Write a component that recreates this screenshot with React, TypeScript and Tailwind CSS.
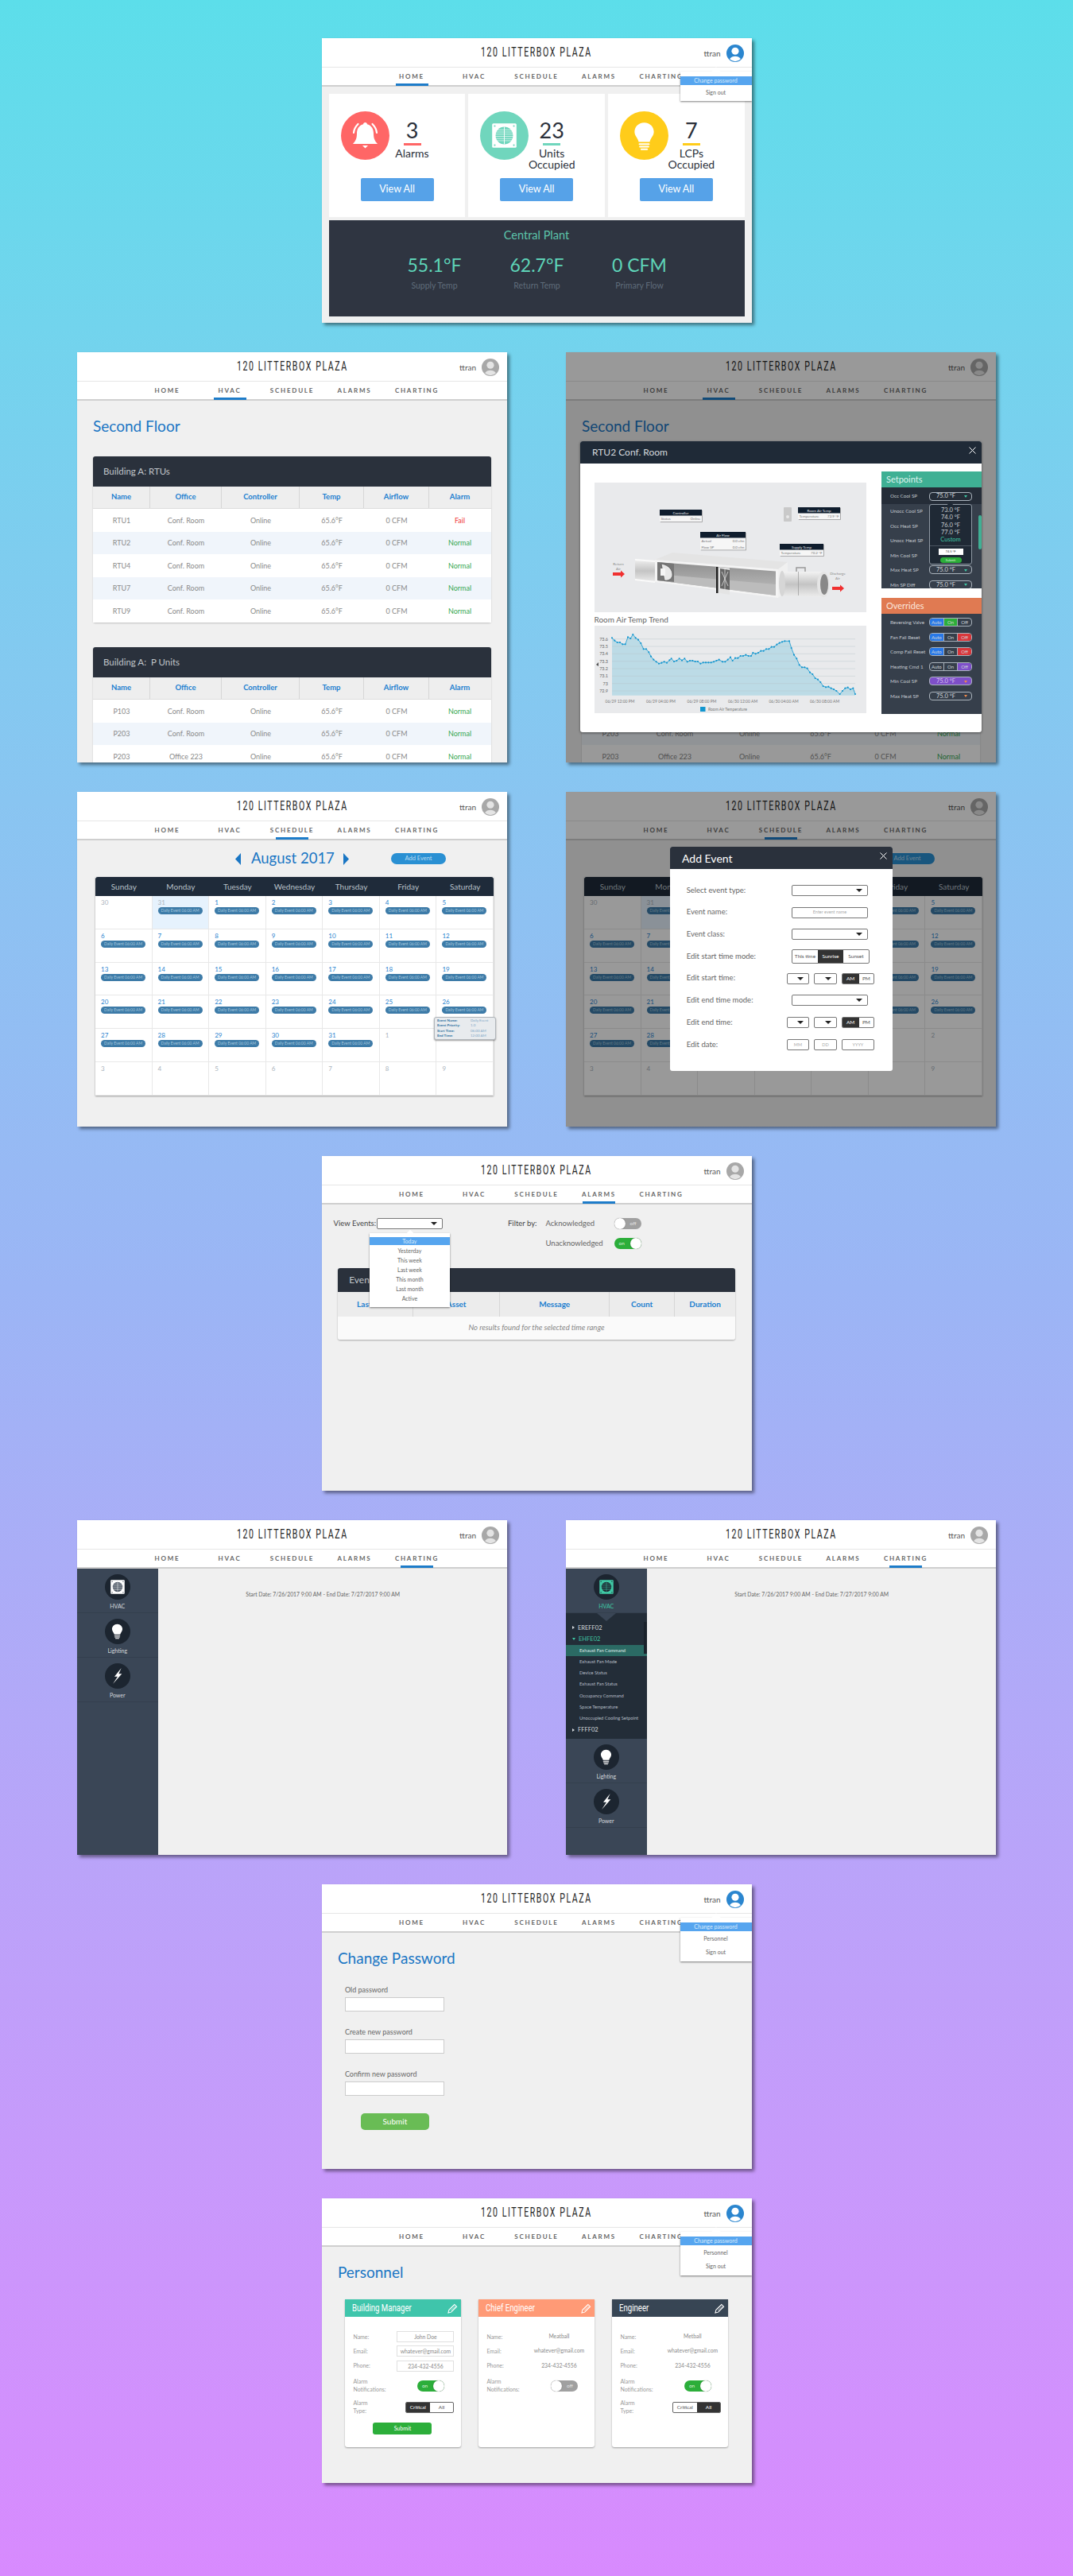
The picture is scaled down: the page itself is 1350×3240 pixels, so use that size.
import type { ReactNode } from 'react'

const NAV = ['HOME', 'HVAC', 'SCHEDULE', 'ALARMS', 'CHARTING']

// chart points read off the reference, x and y in the zoomed pixels
const TREND = [
  [118, 638], [128, 648], [138, 655], [148, 655], [158, 662], [168, 662], [178, 635], [188, 640], [197, 625], [207, 638],
  [217, 645], [227, 658], [237, 680], [247, 680], [257, 692], [265, 708], [275, 720], [285, 728], [295, 735], [305, 732],
  [315, 728], [325, 732], [335, 722], [342, 716], [352, 727], [362, 724], [372, 716], [382, 723], [392, 716], [402, 728],
  [412, 724], [422, 724], [432, 727], [442, 727], [452, 735], [462, 731], [472, 731], [482, 731], [492, 731], [502, 728],
  [512, 724], [522, 720], [535, 728], [545, 728], [555, 720], [565, 711], [573, 724], [583, 714], [593, 714], [603, 706],
  [613, 706], [623, 702], [633, 706], [643, 706], [650, 694], [660, 698], [670, 694], [680, 687], [690, 687], [700, 680],
  [710, 680], [720, 672], [730, 672], [740, 663], [750, 657], [760, 653], [770, 650], [787, 650], [795, 676], [805, 702],
  [815, 716], [825, 740], [835, 749], [845, 749], [855, 753], [865, 768], [875, 775], [885, 790], [895, 795], [905, 805],
  [915, 820], [925, 824], [935, 822], [945, 828], [955, 832], [965, 838], [978, 850], [988, 838], [998, 828], [1008, 825],
  [1018, 832], [1028, 828], [1036, 850],
].map(([x, y]) => [(x - 52) / 3, (y - 592) / 3])

function Avatar({ blue }: { blue?: boolean }) {
  return (
    <svg viewBox="0 0 24 24" className="w-[22px] h-[22px]">
      <circle cx="12" cy="12" r="12" fill={blue ? '#2b86cf' : '#a8a8a8'} />
      <circle cx="12" cy="9" r="5" fill={blue ? '#ffffff' : '#e4e4e4'} />
      <path d="M4.4 20C6 17 9 16 12 16s6 1 7.6 4A11 11 0 0 1 4.4 20Z" fill={blue ? '#ffffff' : '#e4e4e4'} />
    </svg>
  )
}

function BellIcon() {
  return (
    <svg viewBox="0 0 61 61" className="w-[61px] h-[61px]">
      <circle cx="30.5" cy="30.5" r="30.5" fill="#ff6666" />
      <path d="M30.5 14c-1.5 0-2.5 1-2.500 2.300C22 18 20 23 20 28c0 6-1.500 9-5 13h31c-3.500-4-5-7-5-13 0-5-2-10-8-11.700C33 15 32 14 30.500 14Z" fill="#fff" />
      <path d="M27 43h7l-3.500 3.500Z" fill="#fff" />
      <path d="M16 27c.5-5 2.500-8 5.500-11M45 27c-.5-5-2.500-8-5.500-11" stroke="#fff" strokeWidth="2.200" fill="none" strokeLinecap="round" />
    </svg>
  )
}

function FanGlyph({ box, ink }: { box: string; ink: string }) {
  return (
    <>
      <rect x="2" y="2" width="28" height="28" rx="1.500" fill={box} />
      {[5, 27].map((x) => [5, 27].map((y) => <circle key={`${x}-${y}`} cx={x} cy={y} r="1" fill={ink} />))}
      <circle cx="16" cy="16" r="10" fill={ink} />
      {[9, 11.500, 14, 16.500, 19, 21.500].map((y) => (
        <rect key={y} x="5" y={y} width="22" height="0.800" fill={box} opacity="0.700" />
      ))}
      <rect x="15.600" y="6" width="0.800" height="20" fill={box} />
    </>
  )
}

function FanCircle() {
  return (
    <svg viewBox="0 0 61 61" className="w-[61px] h-[61px]">
      <circle cx="30.500" cy="30.500" r="30.500" fill="#70d6bd" />
      <svg x="13" y="13" width="35" height="35" viewBox="0 0 32 32">
        <FanGlyph box="#ffffff" ink="#70d6bd" />
      </svg>
    </svg>
  )
}

function BulbGlyph({ fill }: { fill: string }) {
  return (
    <>
      <path d="M12 1C5.500 1 1.500 6 1.500 11c0 4.500 3.500 6.500 4.500 11h12c1-4.500 4.500-6.500 4.500-11C22.500 6 18.500 1 12 1Z" fill={fill} />
      <rect x="6" y="23.500" width="12" height="1.800" rx="0.900" fill={fill} />
      <rect x="6.500" y="26.300" width="11" height="1.800" rx="0.900" fill={fill} />
      <rect x="8" y="29.100" width="8" height="1.800" rx="0.900" fill={fill} />
    </>
  )
}

function BulbCircle() {
  return (
    <svg viewBox="0 0 61 61" className="w-[61px] h-[61px]">
      <circle cx="30.500" cy="30.500" r="30.500" fill="#ffcc1a" />
      <svg x="16.500" y="13" width="28" height="37" viewBox="0 0 24 32">
        <BulbGlyph fill="#ffffff" />
      </svg>
    </svg>
  )
}

function Shell({
  active,
  blue,
  menu,
  height,
  overlay,
  children,
}: {
  active: string
  blue?: boolean
  menu?: string[]
  height: string
  overlay?: ReactNode
  children: ReactNode
}) {
  return (
    <div className={`relative w-[541px] ${height} bg-[#f0f0f0] flex flex-col overflow-hidden shadow-[3px_3px_4px_rgba(0,0,0,0.45)]`}>
      <div className="relative h-[37px] shrink-0 bg-white flex items-center justify-center border-b border-[#e6e6e6]">
        <span className="inline-block scale-x-[0.66] text-[16px] leading-none tracking-[0.15em] text-[#222] font-['Roboto',sans-serif] whitespace-nowrap">120 LITTERBOX PLAZA</span>
        <div className="absolute right-[10px] top-[8px] flex items-center gap-[7px]">
          <span className="text-[10px] text-[#555]">ttran</span>
          <Avatar blue={blue} />
        </div>
      </div>
      <div className="h-[24px] shrink-0 bg-white flex justify-center border-b-2 border-[#cfcfcf]">
        {NAV.map((item) => (
          <div key={item} className="w-[78.500px] relative flex flex-col items-center">
            <span className="mt-[6px] text-[8px] leading-[10px] font-bold tracking-[0.22em] text-[#666] whitespace-nowrap">{item}</span>
            {item === active && <span className="absolute bottom-[-1px] w-[41px] h-[3px] bg-[#1d7cc9]" />}
          </div>
        ))}
      </div>
      <div className="relative flex-1 min-h-0">{children}</div>
      {overlay && <div className="absolute inset-0 bg-black/40">{overlay}</div>}
      {menu && (
        <div className="absolute right-0 top-[42px] w-[90px] bg-white shadow-[0_1px_2px_rgba(0,0,0,0.5)] pt-[6px] pb-[3px] text-center text-[7px] text-[#666]">
          <span className="absolute top-[-4px] left-[41px] w-[8px] h-[8px] rotate-45 bg-white" />
          {menu.map((item, i) => (
            <div
              key={item}
              className={i === 0 ? 'relative h-[10.700px] leading-[10.700px] bg-[#56a5ef] text-[#dcecfb]' : 'h-[16.500px] leading-[16.500px] mt-[1px] first:mt-0'}
            >
              {item}
            </div>
          ))}
        </div>
      )}
    </div>
  )
}

function StatCard({ icon, count, label, color }: { icon: ReactNode; count: string; label: string[]; color: string }) {
  return (
    <div className="flex-1 h-[155px] bg-white pt-[22px] flex flex-col">
      <div className="h-[84px] flex pl-[15px]">
        {icon}
        <div className="w-[58px] flex flex-col items-center pt-[10px] text-[#2b303a]">
          <span className="text-[27px] leading-[28px]">{count}</span>
          <span className={`w-[22px] h-[3px] mt-[2px] ${color}`} />
          <div className="mt-[3px] text-center text-[14px] leading-[13.500px] whitespace-nowrap">
            {label.map((l) => <div key={l}>{l}</div>)}
          </div>
        </div>
      </div>
      <button className="ml-[40px] w-[92px] h-[29px] rounded-[2px] bg-[#56a2e8] text-white text-[12.500px]">View All</button>
    </div>
  )
}

function HomePanel() {
  const plant = [
    ['55.1°F', 'Supply Temp'],
    ['62.7°F', 'Return Temp'],
    ['0 CFM', 'Primary Flow'],
  ]
  return (
    <Shell active="HOME" blue height="h-[358px]" menu={['Change password', 'Sign out']}>
      <div className="px-[9px] pt-[9px]">
        <div className="flex gap-[4px]">
          <StatCard icon={<BellIcon />} count="3" label={['Alarms']} color="bg-[#ff6666]" />
          <StatCard icon={<FanCircle />} count="23" label={['Units', 'Occupied']} color="bg-[#70d6bd]" />
          <StatCard icon={<BulbCircle />} count="7" label={['LCPs', 'Occupied']} color="bg-[#ffcc1a]" />
        </div>
        <div className="mt-[4px] h-[121px] bg-[#2f3541] flex flex-col items-center">
          <div className="mt-[10px] text-[14.500px] leading-[18px] text-[#5cc4ab]">Central Plant</div>
          <div className="mt-[16px] flex w-[387px] ml-[1px]">
            {plant.map(([value, name]) => (
              <div key={name} className="w-[129px] flex flex-col items-center">
                <span className="text-[23px] leading-[24px] text-[#5ed4b8]">{value}</span>
                <span className="mt-[7px] text-[10.500px] leading-[14px] text-[#5f6c7a]">{name}</span>
              </div>
            ))}
          </div>
        </div>
      </div>
    </Shell>
  )
}

const COLS = 'grid grid-cols-[72px_90px_98px_81px_82px_77px]'

function UnitTable({ title, rows }: { title: string; rows: string[][] }) {
  return (
    <div className="rounded-[3px] shadow-[0_1px_2px_rgba(0,0,0,0.2)]">
      <div className="h-[38px] rounded-t-[3px] bg-[#2a313c] flex items-center pl-[13px] text-[11.500px] text-[#c0c5ca] whitespace-pre">{title}</div>
      <div className={`${COLS} h-[28px] bg-[#eeeeee] border-b border-[#dddddd]`}>
        {['Name', 'Office', 'Controller', 'Temp', 'Airflow', 'Alarm'].map((h) => (
          <div key={h} className="flex items-center justify-center border-r last:border-r-0 border-[#d6d6d6] text-[9.500px] font-bold text-[#1c7fd0]">
            {h}
          </div>
        ))}
      </div>
      {rows.map((row, i) => (
        <div key={i} className={`${COLS} h-[28.600px] items-center text-center text-[9px] text-[#8a8a8a] ${i % 2 ? 'bg-[#f0f5fb]' : 'bg-white'}`}>
          <span>{row[0]}</span>
          <span>{row[1]}</span>
          <span>Online</span>
          <span>65.6°F</span>
          <span>0 CFM</span>
          <span className={row[2] === 'Fail' ? 'text-[#f03a3a]' : 'text-[#35a853]'}>{row[2]}</span>
        </div>
      ))}
    </div>
  )
}

function HvacContent() {
  return (
    <div className="px-[20px] pt-[20px]">
      <h1 className="text-[19px] leading-[24px] text-[#1a76c4]">Second Floor</h1>
      <div className="mt-[26px]">
        <UnitTable
          title="Building A: RTUs"
          rows={[
            ['RTU1', 'Conf. Room', 'Fail'],
            ['RTU2', 'Conf. Room', 'Normal'],
            ['RTU4', 'Conf. Room', 'Normal'],
            ['RTU7', 'Conf. Room', 'Normal'],
            ['RTU9', 'Conf. Room', 'Normal'],
          ]}
        />
      </div>
      <div className="mt-[31px]">
        <UnitTable
          title="Building A:  P Units"
          rows={[
            ['P103', 'Conf. Room', 'Normal'],
            ['P203', 'Conf. Room', 'Normal'],
            ['P203', 'Office 223', 'Normal'],
          ]}
        />
      </div>
    </div>
  )
}

function Tag({ x, y, w, title, rows }: { x: number; y: number; w: number; title: string; rows: string[][] }) {
  return (
    <g fontSize="4.500">
      <rect x={x + 0.800} y={y + 0.800} width={w} height={7.500 + rows.length * 7.500} fill="#999" />
      <rect x={x} y={y} width={w} height={7.500 + rows.length * 7.500} fill="#f6f6f6" />
      <rect x={x} y={y} width={w} height={7.500} fill="#0f1d2d" />
      <text x={x + w / 2} y={y + 5.500} fill="#e6e9ec" textAnchor="middle">{title}</text>
      {rows.map(([k, v], i) => (
        <g key={k} fill="#777">
          <text x={x + 1.500} y={y + 13 + i * 7.500}>{k}</text>
          <text x={x + w - 1.500} y={y + 13 + i * 7.500} textAnchor="end">{v}</text>
        </g>
      ))}
    </g>
  )
}

function DuctDiagram() {
  return (
    <svg viewBox="0 0 342 163" className="w-[342px] h-[163px] block bg-[#e9eaec]">
      <defs>
        <linearGradient id="pipe" x1="0" y1="0" x2="0" y2="1">
          <stop offset="0" stopColor="#f2f2f2" />
          <stop offset="0.500" stopColor="#c4c4c4" />
          <stop offset="1" stopColor="#ededed" />
        </linearGradient>
        <linearGradient id="inner" x1="0" y1="0" x2="0" y2="1">
          <stop offset="0" stopColor="#8f8f8f" />
          <stop offset="0.700" stopColor="#b2b2b2" />
          <stop offset="1" stopColor="#c8c8c8" />
        </linearGradient>
      </defs>
      <Tag x={82} y={34} w={53} title="Controller" rows={[['Status', 'Online']]} />
      <Tag x={133} y={62} w={57} title="Air Flow" rows={[['Actual', '0.0 cfm'], ['Flow SP', '0.0 cfm']]} />
      <Tag x={256} y={31} w={53} title="Room Air Temp" rows={[['Temperature', '72.9 °F']]} />
      <Tag x={233} y={77} w={55} title="Supply Temp" rows={[['Temperature', '70.2 °F']]} />
      <rect x="238" y="31" width="10" height="18" rx="1" fill="#c9c9c9" />
      <circle cx="243" cy="43" r="2" fill="#e8e8e8" />
      <path d="M51 96L76 98V126L51 123Z" fill="url(#pipe)" />
      <path d="M51 96L76 98V100L51 98ZM51 121L76 124V126L51 123Z" fill="#fafafa" />
      <path d="M76 97L98 88L243 100L231 109Z" fill="#e4e4e4" />
      <path d="M231 109L243 100V136L231 145Z" fill="#f0f0f0" />
      <path d="M76 97L231 109V145L76 125Z" fill="#f4f4f4" />
      <path d="M79 100L228 111.500V142L79 123Z" fill="url(#inner)" />
      <path d="M79 115L228 128V142L79 123Z" fill="#bcbcbc" />
      <path d="M79 100L100 102V125L79 123Z" fill="#777" />
      <path d="M84 102C94 104 98 110 98 116C98 120 94 124 88 123Z" fill="#e8e8e8" stroke="#444" strokeWidth="0.600" />
      <rect x="83" y="108" width="6" height="9" fill="#f5f5f5" />
      <path d="M153 106L170 107.500V141L153 138Z" fill="#e4e4e4" />
      <rect x="153" y="106" width="2.500" height="33" fill="#222" />
      <path d="M158 108L170 110V135L158 133Z" fill="#666" />
      <path d="M160 112L168 130M168 112L160 130M164 109V134" stroke="#ddd" strokeWidth="0.800" />
      <path d="M236 112L290 112V144L236 142Z" fill="url(#pipe)" />
      <rect x="256" y="112" width="0.700" height="30" fill="#999" />
      <path d="M254 112V107H265V112" fill="none" stroke="#999" strokeWidth="1.500" />
      <ellipse cx="236" cy="127" rx="4" ry="16" fill="#d6d6d6" />
      <ellipse cx="288" cy="128" rx="8" ry="16" fill="#e5e5e5" />
      <ellipse cx="289" cy="128" rx="5" ry="13" fill="#888" />
      <g fontSize="4.500" fill="#888" textAnchor="middle">
        <text x="30" y="104">Return</text>
        <text x="30" y="110">Air</text>
        <text x="306" y="116">Discharge</text>
        <text x="306" y="122">Air</text>
      </g>
      <path d="M23 113H33V110.500L38 115L33 119.500V117H23Z" fill="#f03030" />
      <path d="M299 131H309V128.500L314 133L309 137.500V135H299Z" fill="#f03030" />
    </svg>
  )
}

function TrendChart() {
  const line = TREND.map(([x, y]) => `${x.toFixed(1)},${y.toFixed(1)}`).join(' ')
  const yLabels = ['73.6', '73.5', '73.4', '73.3', '73.2', '73.1', '73', '72.9']
  const xLabels = ['06/29 12:00 PM', '06/29 04:00 PM', '06/29 08:00 PM', '06/30 12:00 AM', '06/30 04:00 AM', '06/30 08:00 AM']
  return (
    <svg viewBox="0 0 342 110" className="w-[342px] h-[110px] block bg-[#e9eaec]">
      <polygon points={`22,87.7 ${line} 328,87.700`} fill="#bcdbe6" />
      {yLabels.map((label, i) => (
        <g key={label}>
          <line x1="22" x2="328" y1={16.700 + i * 9.330} y2={16.700 + i * 9.330} stroke="#b5c2c8" strokeWidth="0.400" />
          <text x="17" y={18.700 + i * 9.330} fontSize="5.500" fill="#666" textAnchor="end">{label}</text>
        </g>
      ))}
      <path d="M2 49L5 51V46Z" fill="#555" />
      <polyline points={line} fill="none" stroke="#1296cf" strokeWidth="0.800" />
      {TREND.map(([x, y]) => <circle key={x} cx={x} cy={y} r="1.050" fill="#1296cf" />)}
      {xLabels.map((label, i) => (
        <text key={label} x={32 + i * 51.500} y="96.500" fontSize="5" fill="#777" textAnchor="middle">{label}</text>
      ))}
      <rect x="133" y="102" width="6.500" height="6" fill="#1296cf" />
      <text x="143" y="107" fontSize="5" fill="#777">Room Air Temperature</text>
    </svg>
  )
}

function PillSelect({ filled, arrow = '#3fc7a4' }: { filled?: boolean; arrow?: string }) {
  return (
    <div className={`relative w-[54px] h-[11px] rounded-[4px] border border-[#a9b2bb] flex items-center pl-[8px] text-[7.500px] ${filled ? 'bg-[#7e4fc9] text-[#d8c6f0]' : 'text-[#d4d8dc]'}`}>
      75.0 °F
      <span className="absolute right-[5px] top-[3.500px] border-x-[2.500px] border-x-transparent border-t-[3px]" style={{ borderTopColor: arrow }} />
    </div>
  )
}

function Seg({ auto, on, off }: { auto?: string; on?: string; off?: string }) {
  const cells: [string, string | undefined][] = [['Auto', auto], ['On', on], ['Off', off]]
  return (
    <div className="w-[54px] h-[11px] rounded-[4px] border border-[#a9b2bb] overflow-hidden flex text-[6px] leading-[9px] text-center text-[#cfd4d9]">
      {cells.map(([label, color]) => (
        <span key={label} className={`flex-1 border-r last:border-r-0 border-[#a9b2bb] ${color ?? ''}`}>{label}</span>
      ))}
    </div>
  )
}

function SetRow({ label, first, children }: { label: string; first?: boolean; children?: ReactNode }) {
  return (
    <div className={`flex items-center pl-[11px] text-[6.300px] text-[#c3c9cf] ${first ? 'h-[21px] pt-[2px] bg-[#252d38]' : 'h-[18.500px]'}`}>
      <span className="w-[49px] whitespace-nowrap">{label}</span>
      {children}
    </div>
  )
}

function RtuModal() {
  return (
    <div className="absolute left-[18px] top-[112px] w-[505px] h-[366px] bg-white rounded-[3px] overflow-hidden shadow-[0_1px_3px_rgba(0,0,0,0.5)]">
      <div className="relative h-[28px] bg-[#1f2a37] flex items-center pl-[15px] text-[12px] text-[#d5d9dd]">
        RTU2 Conf. Room
        <span className="absolute right-[7px] top-[7px] w-[9px] h-[9px]">
          <svg viewBox="0 0 9 9" className="w-[9px] h-[9px]"><path d="M0.500 0.500L8.500 8.500M8.500 0.500L0.500 8.500" stroke="#fff" strokeWidth="1" /></svg>
        </span>
      </div>
      <div className="flex">
        <div className="w-[379px] pl-[17.500px] pt-[24px]">
          <DuctDiagram />
          <div className="h-[17px] leading-[19px] text-[10px] text-[#666]">Room Air Temp Trend</div>
          <TrendChart />
        </div>
        <div className="w-[126px] pt-[10px]">
          <div className="relative h-[147px] overflow-hidden bg-[#363f4b]">
            <div className="h-[19.500px] bg-[#3fb094] flex items-center pl-[6px] text-[11px] text-[#dff3ee]">Setpoints</div>
            <SetRow label="Occ Cool SP" first><PillSelect /></SetRow>
            <SetRow label="Unocc Cool SP" />
            <SetRow label="Occ Heat SP" />
            <SetRow label="Unocc Heat SP" />
            <SetRow label="Min Cool SP" />
            <SetRow label="Max Heat SP"><PillSelect /></SetRow>
            <SetRow label="Min SP Diff"><PillSelect /></SetRow>
            <span className="absolute right-[0px] top-[55px] w-[4px] h-[43px] rounded-[2px] bg-[#3fb094]" />
            <div className="absolute left-[60px] top-[41px] w-[54px] h-[76px] rounded-[3px] border border-[#8f99a3] bg-[#1f2935] text-center text-[7.500px] leading-[9.300px] text-[#c9ced3] pt-[2px]">
              <span className="absolute left-[23px] top-[-3px] w-[5px] h-[5px] rotate-45 bg-[#1f2935]" />
              <div>73.0 °F</div>
              <div>74.0 °F</div>
              <div>76.0 °F</div>
              <div>77.0 °F</div>
              <div className="text-[#3fc7a4]">Custom</div>
              <div className="mt-[3px] border-t border-[#4a5460] flex flex-col items-center pt-[3px]">
                <div className="w-[31px] h-[8px] bg-white text-[4px] leading-[8px] text-[#333]">74.5 °F</div>
                <div className="mt-[3px] w-[27px] h-[7px] rounded-full bg-[#2cae3a] text-[4px] leading-[7px] text-[#d6f0d9]">Submit</div>
              </div>
            </div>
          </div>
          <div className="mt-[12px] h-[146px] bg-[#363f4b]">
            <div className="h-[19.500px] bg-[#e07a52] flex items-center pl-[6px] text-[11px] text-[#fbe6dc]">Overrides</div>
            <div className="pt-[2px]">
              <SetRow label="Reversing Valve"><Seg auto="bg-[#2878e8]" on="bg-[#2cae3a]" /></SetRow>
              <SetRow label="Fan Fail Reset"><Seg auto="bg-[#2878e8]" off="bg-[#d9363a]" /></SetRow>
              <SetRow label="Comp Fail Reset"><Seg auto="bg-[#2878e8]" off="bg-[#d9363a]" /></SetRow>
              <SetRow label="Heating Cmd 1"><Seg off="bg-[#7e4fc9]" /></SetRow>
              <SetRow label="Min Cool SP"><PillSelect filled arrow="#f08a4b" /></SetRow>
              <SetRow label="Max Heat SP"><PillSelect arrow="#f08a4b" /></SetRow>
            </div>
          </div>
        </div>
      </div>
    </div>
  )
}

const DAYS = ['Sunday', 'Monday', 'Tuesday', 'Wednesday', 'Thursday', 'Friday', 'Saturday']
const DATES = [
  '30', '31', '1', '2', '3', '4', '5',
  '6', '7', '8', '9', '10', '11', '12',
  '13', '14', '15', '16', '17', '18', '19',
  '20', '21', '22', '23', '24', '25', '26',
  '27', '28', '29', '30', '31', '1', '2',
  '3', '4', '5', '6', '7', '8', '9',
]

function Triangle({ flip }: { flip?: boolean }) {
  return (
    <svg viewBox="0 0 7 15" className="w-[7px] h-[15px] shrink-0">
      <path d={flip ? 'M0 0L7 7.500L0 15Z' : 'M7 0L0 7.500L7 15Z'} fill="#1a76c4" />
    </svg>
  )
}

function ScheduleContent({ tip }: { tip?: boolean }) {
  return (
    <div>
      <div className="h-[46px] pl-[199px] flex items-center">
        <Triangle />
        <span className="ml-[13px] w-[102px] text-[18.500px] text-[#1a76c4] whitespace-nowrap">August 2017</span>
        <span className="ml-[14px]"><Triangle flip /></span>
        <button className="ml-[53px] w-[69px] h-[14px] rounded-full bg-[#2a90d3] text-[7.500px] leading-[14px] text-[#b9dcf2]">Add Event</button>
      </div>
      <div className="relative ml-[23px] w-[501px] shadow-[0_1px_2px_rgba(0,0,0,0.35)] bg-white">
        <div className="h-[24px] grid grid-cols-7 bg-[#1f2b3a] rounded-t-[3px]">
          {DAYS.map((d) => (
            <div key={d} className="flex items-center justify-center text-[10px] text-[#b9c1c9]">{d}</div>
          ))}
        </div>
        <div className="grid grid-cols-7">
          {DATES.map((date, i) => {
            const outside = i < 2 || (i >= 33)
            const hasEvent = (i >= 1 && i < 33)
            return (
              <div key={i} className={`h-[41.800px] border-r border-b border-[#e8e8e8] pl-[7px] pt-[2px] ${i === 1 ? 'bg-[#e6f2fd]' : ''}`}>
                <div className={`text-[8px] leading-[12px] ${outside ? 'text-[#aab4bd]' : 'text-[#2b84cf]'}`}>{date}</div>
                {hasEvent && (
                  <div className="w-[56px] h-[9px] rounded-full bg-[#3d7ba8] text-center text-[5px] leading-[9px] text-[#a6c8de] whitespace-nowrap">
                    Daily Event 06:00 AM
                  </div>
                )}
              </div>
            )
          })}
        </div>
        {tip && (
          <div className="absolute left-[426px] top-[176px] w-[78px] h-[29px] rounded-[3px] bg-[#e8ebee] border border-[#b0b5ba] shadow-[0_1px_2px_rgba(0,0,0,0.4)] pl-[3px] pt-[1px] text-[4.500px] leading-[6.300px] text-[#2b84cf]">
            {[['Event Name:', 'Daily Event'], ['Event Priority:', '1.0'], ['Start Time:', '06:00 AM'], ['End Time:', '12:00 AM']].map(([k, v]) => (
              <div key={k} className="flex">
                <span className="w-[42px] font-bold text-[#2a6f9f]">{k}</span>
                <span className="text-[#7fa8c8]">{v}</span>
              </div>
            ))}
          </div>
        )}
      </div>
    </div>
  )
}

function DropBox({ w, text, caret = true }: { w: string; text?: string; caret?: boolean }) {
  return (
    <div className={`relative ${w} h-[14px] rounded-[2px] border border-[#777] bg-white flex items-center justify-center text-[5.500px] text-[#aaa] shrink-0`}>
      {text}
      {caret && <span className="absolute right-[6px] top-[4px] border-x-[4px] border-x-transparent border-t-[4px] border-t-[#222]" />}
    </div>
  )
}

function AmPm() {
  return (
    <div className="w-[41.500px] h-[14px] rounded-[2px] border border-[#777] flex bg-white text-[6.500px] leading-[12px] text-center overflow-hidden shrink-0">
      <span className="w-[21px] bg-[#333] text-white">AM</span>
      <span className="flex-1 text-[#555]">PM</span>
    </div>
  )
}

function FormRow({ label, small, children }: { label: string; small?: boolean; children: ReactNode }) {
  return (
    <div className="h-[27.700px] flex items-center">
      <span className={`${small ? 'w-[126px]' : 'w-[132.300px]'} whitespace-nowrap text-[9.500px] text-[#666]`}>{label}</span>
      {children}
    </div>
  )
}

function TimeRow({ label }: { label: string }) {
  return (
    <FormRow label={label} small>
      <div className="flex gap-[6px]">
        <DropBox w="w-[28.500px]" />
        <DropBox w="w-[28.500px]" />
        <AmPm />
      </div>
    </FormRow>
  )
}

function EventModal() {
  return (
    <div className="absolute left-[131px] top-[69px] w-[280px] h-[282px] bg-white rounded-[3px] overflow-hidden">
      <div className="relative h-[28px] bg-[#2a313c] flex items-center pl-[15px] text-[14px] text-white">
        Add Event
        <svg viewBox="0 0 9 9" className="absolute right-[7px] top-[7px] w-[9px] h-[9px]"><path d="M0.500 0.500L8.500 8.500M8.500 0.500L0.500 8.500" stroke="#fff" strokeWidth="1" /></svg>
      </div>
      <div className="pl-[20.700px] pt-[13px]">
        <FormRow label="Select event type:"><DropBox w="w-[96px]" /></FormRow>
        <FormRow label="Event name:"><DropBox w="w-[96px]" text="Enter event name" caret={false} /></FormRow>
        <FormRow label="Event class:"><DropBox w="w-[96px]" /></FormRow>
        <FormRow label="Edit start time mode:">
          <div className="w-[98px] h-[18px] rounded-[2px] border border-[#777] flex text-[6.500px] leading-[16px] text-center text-[#555]">
            <span className="flex-1">This time</span>
            <span className="flex-1 bg-[#333] text-white">Sunrise</span>
            <span className="flex-1">Sunset</span>
          </div>
        </FormRow>
        <TimeRow label="Edit start time:" />
        <FormRow label="Edit end time mode:"><DropBox w="w-[96px]" /></FormRow>
        <TimeRow label="Edit end time:" />
        <FormRow label="Edit date:" small>
          <div className="flex gap-[6px]">
            <DropBox w="w-[28.500px]" text="MM" caret={false} />
            <DropBox w="w-[28.500px]" text="DD" caret={false} />
            <DropBox w="w-[41.500px]" text="YYYY" caret={false} />
          </div>
        </FormRow>
      </div>
    </div>
  )
}

function Toggle({ on }: { on?: boolean }) {
  return (
    <div className={`relative w-[34px] h-[14px] rounded-full ${on ? 'bg-[#2cae3a]' : 'bg-[#a0a0a0]'}`}>
      <span className={`absolute top-[2px] text-[6.500px] leading-[9px] ${on ? 'left-[6px] text-[#d6f0d9]' : 'right-[6px] text-[#e4e4e4]'}`}>{on ? 'on' : 'off'}</span>
      <span className={`absolute top-0 w-[14px] h-[14px] rounded-full bg-white shadow-[0_0_1px_rgba(0,0,0,0.5)] ${on ? 'right-0' : 'left-0'}`} />
    </div>
  )
}

function AlarmsContent() {
  const cols = 'grid grid-cols-[95px_109px_138px_82px_76px]'
  return (
    <div>
      <div className="relative pt-[11.300px] flex text-[9.500px]">
        <div className="flex items-center h-[25.400px] pl-[15px] text-[#444]">
          <span className="w-[54.500px]">View Events:</span>
          <DropBox w="w-[83px]" />
        </div>
        <span className="absolute left-[234.500px] top-[11.300px] h-[25.400px] leading-[25.400px] text-[#444]">Filter by:</span>
        <div className="absolute left-[282px] top-[11.300px] w-[120px] text-[#666]">
          <div className="h-[25.400px] flex items-center justify-between">Acknowledged<Toggle /></div>
          <div className="h-[25.400px] flex items-center justify-between">Unacknowledged<Toggle on /></div>
        </div>
        <div className="h-[50.800px]" />
      </div>
      <div className="mt-[17.700px] ml-[20.700px] w-[499.500px] rounded-[3px] shadow-[0_1px_2px_rgba(0,0,0,0.3)]">
        <div className="h-[30.600px] rounded-t-[3px] bg-[#2a313c] pl-[14px] flex items-center text-[12px] text-[#c0c5ca]">Events</div>
        <div className={`${cols} h-[30.600px] bg-[#ececec]`}>
          {['Last Event', 'Asset', 'Message', 'Count', 'Duration'].map((h) => (
            <div key={h} className="flex items-center justify-center border-r last:border-r-0 border-[#d6d6d6] text-[10px] font-bold text-[#1c7fd0]">{h}</div>
          ))}
        </div>
        <div className="h-[29px] bg-[#fafafa] rounded-b-[3px] flex items-center justify-center italic text-[9.500px] text-[#888]">No results found for the selected time range</div>
      </div>
      <div className="absolute left-[60.400px] top-[35.700px] w-[101px] h-[93px] bg-white shadow-[0_1px_2px_rgba(0,0,0,0.5)] pt-[5px] text-center text-[7px] leading-[12px] text-[#666]">
        <span className="absolute left-[48px] top-[-3px] w-[6px] h-[6px] rotate-45 bg-white" />
        <div className="relative h-[10.700px] leading-[10.700px] bg-[#56a5ef] text-[#dcecfb] mb-[1px]">Today</div>
        {['Yesterday', 'This week', 'Last week', 'This month', 'Last month', 'Active'].map((item) => <div key={item}>{item}</div>)}
      </div>
    </div>
  )
}

function SideCircle({ children }: { children: ReactNode }) {
  return <span className="w-[32.400px] h-[32.400px] rounded-full bg-[#1c2530] flex items-center justify-center">{children}</span>
}

function SideItem({ label, teal, kind }: { label: string; teal?: boolean; kind: 'fan' | 'bulb' | 'bolt' }) {
  return (
    <div className="h-[56px] pt-[7px] flex flex-col items-center border-b border-[#343f4e]">
      <SideCircle>
        {kind === 'fan' && (
          <svg viewBox="0 0 32 32" className="w-[20px] h-[20px]">
            <FanGlyph box={teal ? '#3fc7a4' : '#ffffff'} ink={teal ? '#1c2530' : '#4b5563'} />
          </svg>
        )}
        {kind === 'bulb' && (
          <svg viewBox="0 0 24 32" className="w-[15px] h-[22px]"><BulbGlyph fill="#ffffff" /></svg>
        )}
        {kind === 'bolt' && (
          <svg viewBox="0 0 24 32" className="w-[16px] h-[24px]"><path d="M19 1L6 17L12 17L3 31L20 12L14 12Z" fill="#ffffff" /></svg>
        )}
      </SideCircle>
      <span className={`mt-[2px] text-[7px] leading-[12px] ${teal ? 'text-[#3fc7a4]' : 'text-[#d5d9dd]'}`}>{label}</span>
    </div>
  )
}

function DateNote() {
  return (
    <div className="flex-1 pt-[27px] pr-[24px] text-center text-[6.800px] leading-[10px] text-[#666]">
      Start Date: 7/26/2017 9:00 AM - End Date: 7/27/2017 9:00 AM
    </div>
  )
}

function ChartingPlain() {
  return (
    <div className="h-full flex">
      <div className="w-[101.500px] bg-[#3a4656]">
        <SideItem label="HVAC" kind="fan" />
        <SideItem label="Lighting" kind="bulb" />
        <SideItem label="Power" kind="bolt" />
      </div>
      <DateNote />
    </div>
  )
}

function TreeSub({ label, on }: { label: string; on?: boolean }) {
  return (
    <div className={`h-[14.300px] pl-[17px] text-[5.800px] leading-[14.300px] whitespace-nowrap ${on ? 'bg-[#2b6a64] text-[#dfe7e6]' : 'text-[#b4bcc4]'}`}>{label}</div>
  )
}

function TreeTop({ label, open }: { label: string; open?: boolean }) {
  return (
    <div className={`h-[14.300px] pl-[8px] flex items-center gap-[4px] text-[7.500px] ${open ? 'text-[#3fc7a4]' : 'text-[#d5d9dd]'}`}>
      <span className={open ? 'border-x-[2px] border-x-transparent border-t-[3px] border-t-[#3fc7a4]' : 'border-y-[2px] border-y-transparent border-l-[3px] border-l-[#d5d9dd]'} />
      {label}
    </div>
  )
}

function ChartingOpen() {
  return (
    <div className="h-full flex">
      <div className="w-[101.500px] bg-[#3a4656]">
        <SideItem label="HVAC" kind="fan" teal />
        <div className="relative h-[158px] bg-[#232d38] pt-[11px]">
          <span className="absolute left-[39px] top-0 border-x-[12px] border-x-transparent border-t-[10px] border-t-[#3a4656]" />
          <span className="absolute right-0 top-[11px] w-[4px] h-[40px] bg-[#1a222b]" />
          <TreeTop label="EREFF02" />
          <TreeTop label="EHFE02" open />
          <TreeSub label="Exhaust Fan Command" on />
          <TreeSub label="Exhaust Fan Mode" />
          <TreeSub label="Device Status" />
          <TreeSub label="Exhaust Fan Status" />
          <TreeSub label="Occupancy Command" />
          <TreeSub label="Space Temperature" />
          <TreeSub label="Unoccupied Cooling Setpoint" />
          <TreeTop label="FFFF02" />
        </div>
        <SideItem label="Lighting" kind="bulb" />
        <SideItem label="Power" kind="bolt" />
      </div>
      <DateNote />
    </div>
  )
}

function PasswordContent() {
  return (
    <div className="pl-[20.400px] pt-[20px]">
      <h1 className="text-[19px] leading-[24px] text-[#1a76c4]">Change Password</h1>
      <div className="pl-[9px] pt-[20px]">
        {['Old password', 'Create new password', 'Confirm new password'].map((label) => (
          <div key={label} className="h-[53px]">
            <div className="h-[15px] text-[9px] leading-[15px] text-[#666]">{label}</div>
            <div className="mt-[2px] w-[125.500px] h-[18px] bg-white border border-[#cccccc]" />
          </div>
        ))}
        <button className="ml-[20px] w-[86px] h-[21px] rounded-[5px] bg-[#69bc55] text-[10px] text-white">Submit</button>
      </div>
    </div>
  )
}

function Pencil() {
  return (
    <svg viewBox="0 0 14 14" className="w-[13px] h-[13px]">
      <path d="M1 13L2 9L9.500 1.500L12.500 4.500L5 12Z" fill="none" stroke="#fff" strokeWidth="1.100" />
      <path d="M3 8L9.500 2.500M4.500 9.500L11 4M5.500 11L12 5" stroke="#fff" strokeWidth="0.700" />
    </svg>
  )
}

function Field({ label, value, boxed }: { label: string; value: string; boxed?: boolean }) {
  return (
    <div className="h-[18.300px] flex items-center">
      <span className="w-[65.500px] pl-[10.500px] text-[7px] text-[#999]">{label}</span>
      <div className={`w-[72px] h-[14px] text-center text-[6.800px] leading-[13px] text-[#8a8a8a] whitespace-nowrap ${boxed ? 'border border-[#e0e0e0]' : ''}`}>{value}</div>
    </div>
  )
}

function PersonCard({ title, name, color, boxed, type, on }: { title: string; name: string; color: string; boxed?: boolean; type?: 'critical' | 'all'; on?: boolean }) {
  return (
    <div className="w-[146px] h-[186px] bg-white rounded-b-[3px] shadow-[0_1px_2px_rgba(0,0,0,0.35)]">
      <div className={`h-[22px] ${color} flex items-center justify-between pl-[9.500px] pr-[4px] text-white`}>
        <span className="inline-block origin-left scale-x-[0.74] text-[13px] whitespace-nowrap font-['Roboto',sans-serif]">{title}</span>
        <Pencil />
      </div>
      <div className="pt-[16px]">
        <Field label="Name:" value={name} boxed={boxed} />
        <Field label="Email:" value="whatever@gmail.com" boxed={boxed} />
        <Field label="Phone:" value="234-432-4556" boxed={boxed} />
        <div className="mt-[5px] h-[22px] flex items-center">
          <span className="w-[91px] pl-[10.500px] text-[7px] leading-[9.500px] text-[#999]">Alarm<br />Notifications:</span>
          <Toggle on={on} />
        </div>
        {type && (
          <div className="mt-[5px] h-[22px] flex items-center">
            <span className="w-[76px] pl-[10.500px] text-[7px] leading-[9.500px] text-[#999]">Alarm<br />Type:</span>
            <div className="w-[61.500px] h-[14px] rounded-[2px] border border-[#666] flex text-[6.500px] leading-[12px] text-center text-[#555] overflow-hidden">
              <span className={`flex-1 ${type === 'critical' ? 'bg-[#333] text-white' : ''}`}>Critical</span>
              <span className={`flex-1 ${type === 'all' ? 'bg-[#333] text-white' : ''}`}>All</span>
            </div>
          </div>
        )}
        {boxed && <button className="mt-[8px] ml-[35.500px] w-[74px] h-[15px] rounded-[3px] bg-[#2cae3a] text-[7px] text-white">Submit</button>}
      </div>
    </div>
  )
}

function PersonnelContent() {
  return (
    <div className="pl-[20.400px] pt-[20px]">
      <h1 className="text-[19px] leading-[24px] text-[#1a76c4]">Personnel</h1>
      <div className="ml-[9px] mt-[22px] flex gap-[22px]">
        <PersonCard title="Building Manager" name="John Doe" color="bg-[#3fc5ab]" boxed type="critical" on />
        <PersonCard title="Chief Engineer" name="Meatball" color="bg-[#ff9a76]" />
        <PersonCard title="Engineer" name="Metball" color="bg-[#374554]" type="all" on />
      </div>
    </div>
  )
}

export default function App() {
  return (
    <div className="w-[1350px] h-[3240px] pt-[48px] flex flex-col items-center gap-[37px] bg-linear-to-b from-[#5cdeea] via-[#9bb5f5] via-50% to-[#d88afe] font-['Lato',sans-serif]">
      <HomePanel />
      <div className="flex gap-[74px]">
        <Shell active="HVAC" height="h-[516px]">
          <HvacContent />
        </Shell>
        <Shell active="HVAC" height="h-[516px]" overlay={<RtuModal />}>
          <HvacContent />
        </Shell>
      </div>
      <div className="flex gap-[74px]">
        <Shell active="SCHEDULE" height="h-[421px]">
          <ScheduleContent tip />
        </Shell>
        <Shell active="SCHEDULE" height="h-[421px]" overlay={<EventModal />}>
          <ScheduleContent />
        </Shell>
      </div>
      <Shell active="ALARMS" height="h-[421px]">
        <AlarmsContent />
      </Shell>
      <div className="flex gap-[74px]">
        <Shell active="CHARTING" height="h-[421px]">
          <ChartingPlain />
        </Shell>
        <Shell active="CHARTING" height="h-[421px]">
          <ChartingOpen />
        </Shell>
      </div>
      <Shell active="" blue height="h-[358px]" menu={['Change password', 'Personnel', 'Sign out']}>
        <PasswordContent />
      </Shell>
      <Shell active="" blue height="h-[358px]" menu={['Change password', 'Personnel', 'Sign out']}>
        <PersonnelContent />
      </Shell>
    </div>
  )
}
